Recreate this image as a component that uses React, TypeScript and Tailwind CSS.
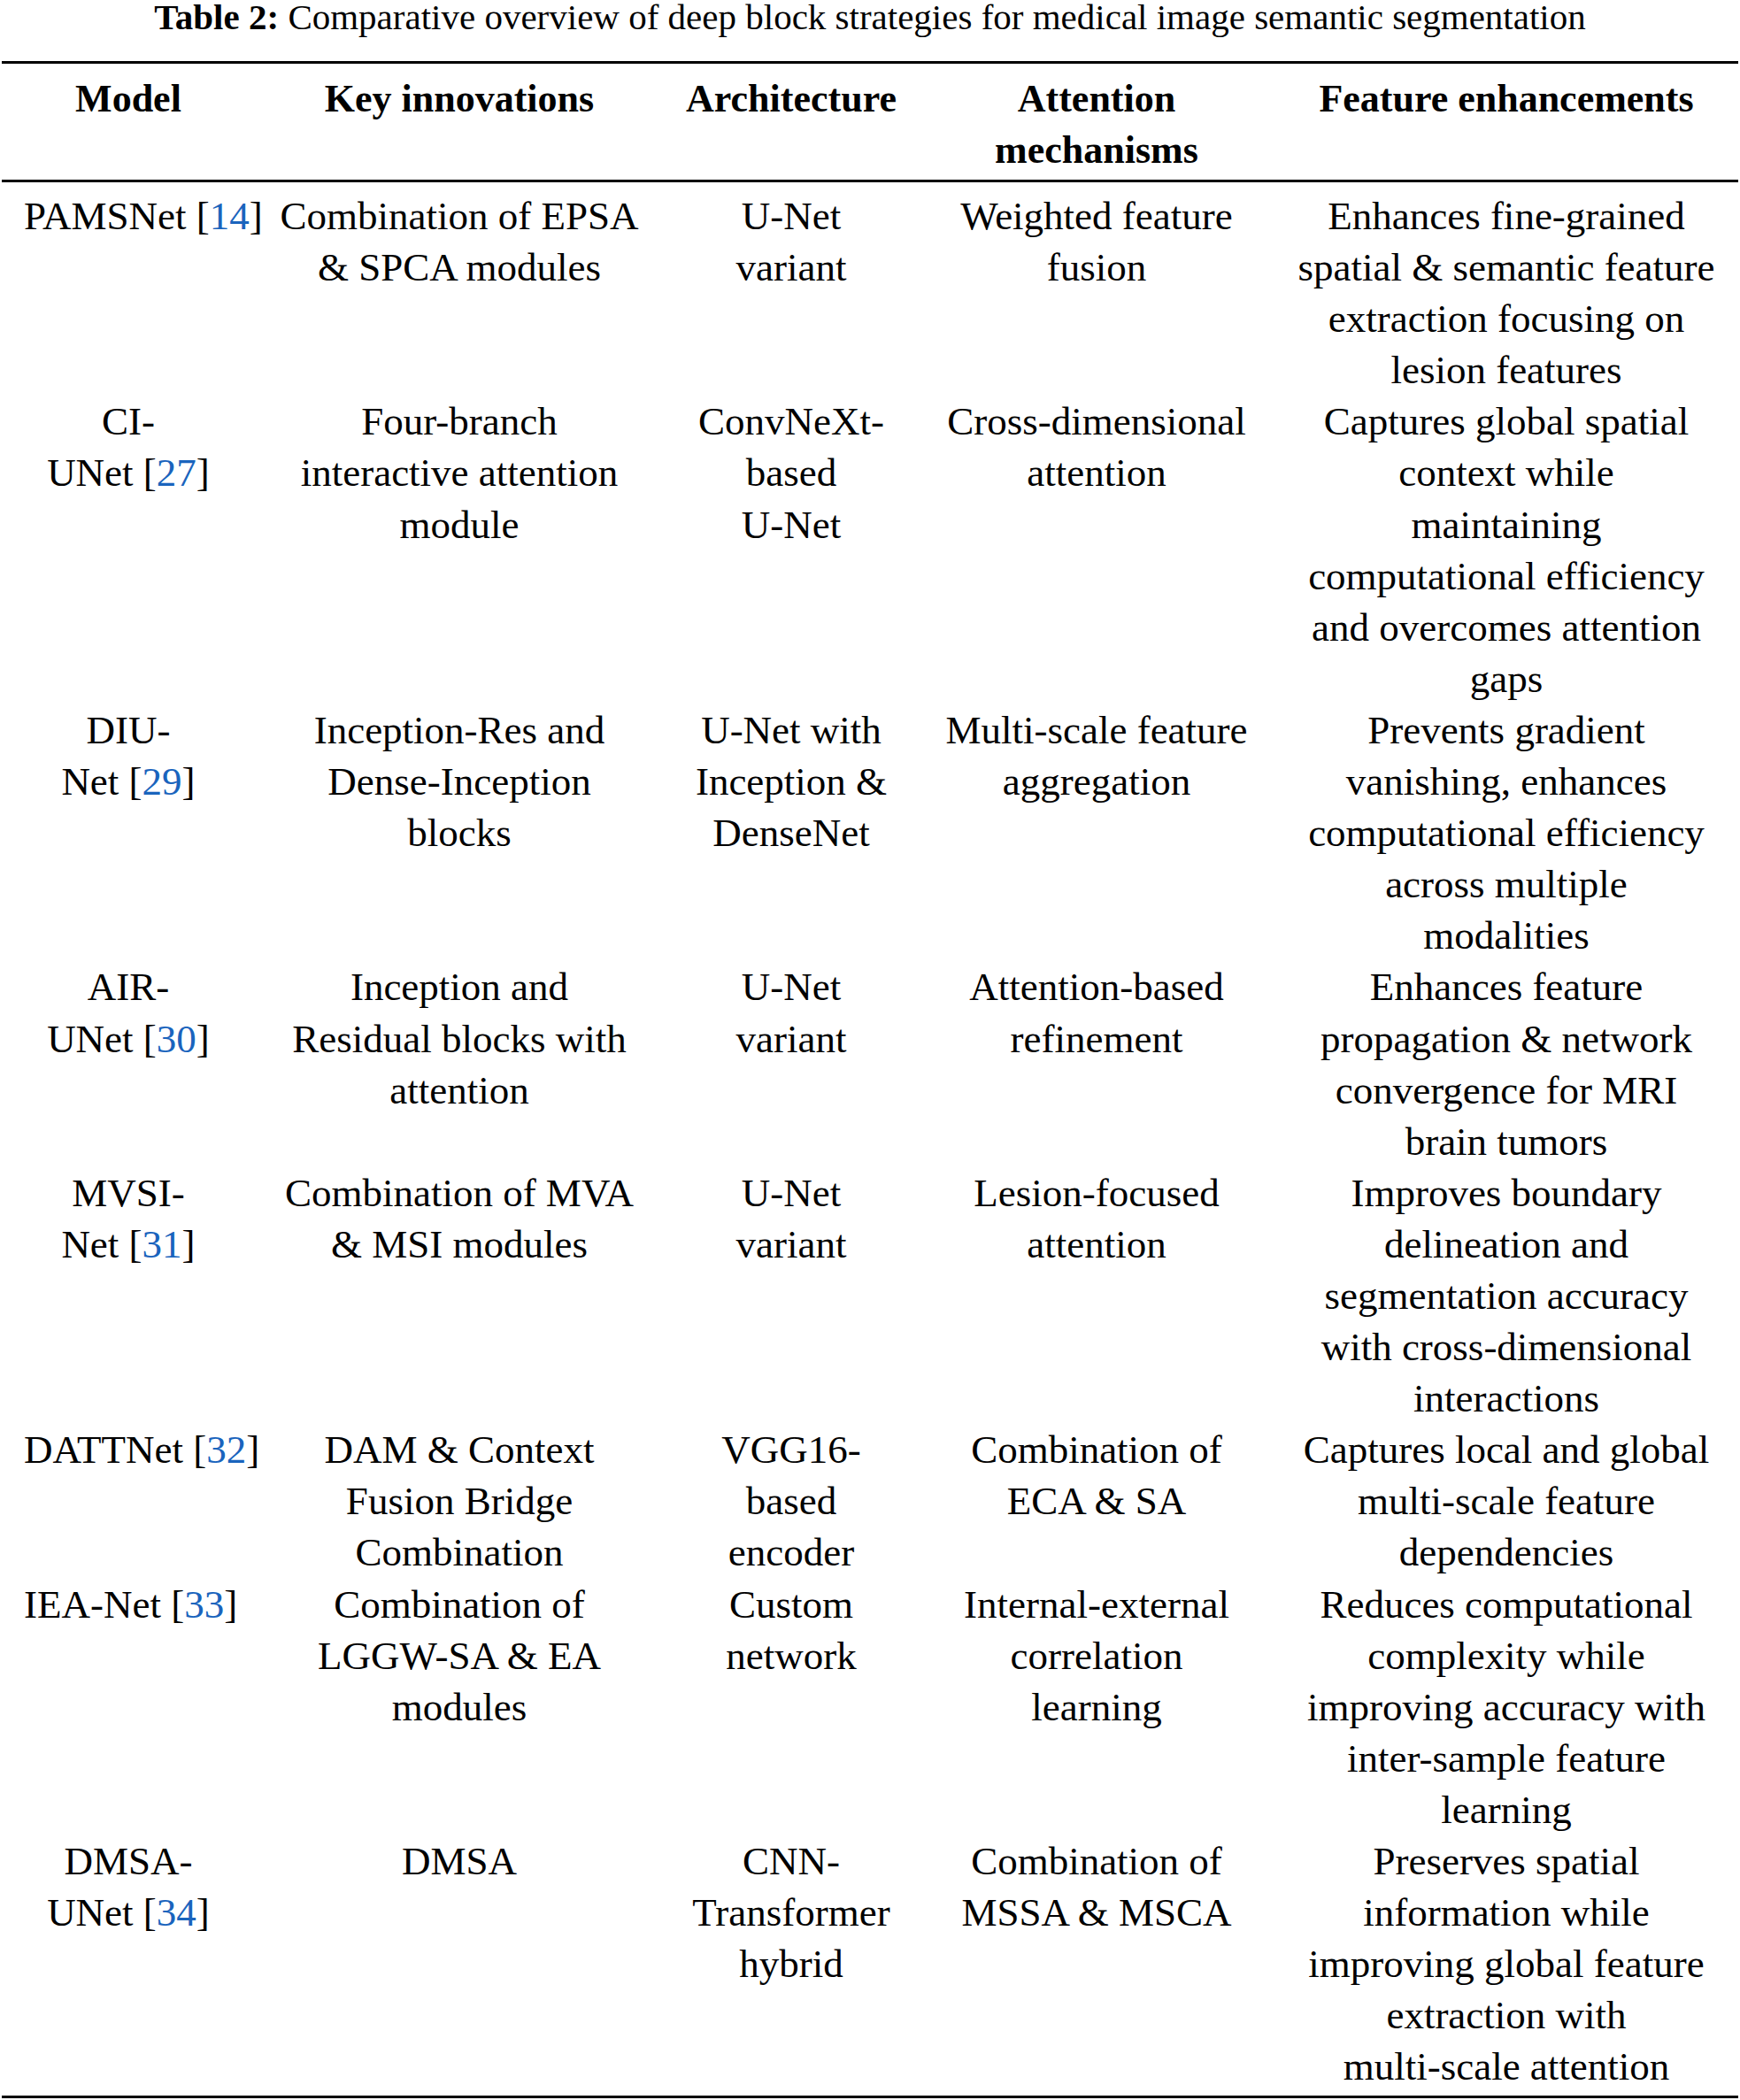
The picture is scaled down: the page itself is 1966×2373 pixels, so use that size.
import React from "react";

type Row = {
  model: React.ReactNode[];
  key: string[];
  arch: string[];
  att: string[];
  feat: string[];
};

const Ref = ({ n }: { n: number }) => (
  <>
    [<span className="text-[#1a64bd]">{n}</span>]
  </>
);

const rows: Row[] = [
  {
    model: [<>PAMSNet&nbsp;<Ref n={14} /></>],
    key: ["Combination of EPSA", "& SPCA modules"],
    arch: ["U-Net", "variant"],
    att: ["Weighted feature", "fusion"],
    feat: ["Enhances fine-grained", "spatial & semantic feature", "extraction focusing on", "lesion features"],
  },
  {
    model: ["CI-", <>UNet&nbsp;<Ref n={27} /></>],
    key: ["Four-branch", "interactive attention", "module"],
    arch: ["ConvNeXt-", "based", "U-Net"],
    att: ["Cross-dimensional", "attention"],
    feat: ["Captures global spatial", "context while", "maintaining", "computational efficiency", "and overcomes attention", "gaps"],
  },
  {
    model: ["DIU-", <>Net&nbsp;<Ref n={29} /></>],
    key: ["Inception-Res and", "Dense-Inception", "blocks"],
    arch: ["U-Net with", "Inception &", "DenseNet"],
    att: ["Multi-scale feature", "aggregation"],
    feat: ["Prevents gradient", "vanishing, enhances", "computational efficiency", "across multiple", "modalities"],
  },
  {
    model: ["AIR-", <>UNet&nbsp;<Ref n={30} /></>],
    key: ["Inception and", "Residual blocks with", "attention"],
    arch: ["U-Net", "variant"],
    att: ["Attention-based", "refinement"],
    feat: ["Enhances feature", "propagation & network", "convergence for MRI", "brain tumors"],
  },
  {
    model: ["MVSI-", <>Net&nbsp;<Ref n={31} /></>],
    key: ["Combination of MVA", "& MSI modules"],
    arch: ["U-Net", "variant"],
    att: ["Lesion-focused", "attention"],
    feat: ["Improves boundary", "delineation and", "segmentation accuracy", "with cross-dimensional", "interactions"],
  },
  {
    model: [<>DATTNet&nbsp;<Ref n={32} /></>],
    key: ["DAM & Context", "Fusion Bridge", "Combination"],
    arch: ["VGG16-", "based", "encoder"],
    att: ["Combination of", "ECA & SA"],
    feat: ["Captures local and global", "multi-scale feature", "dependencies"],
  },
  {
    model: [<>IEA-Net&nbsp;<Ref n={33} /></>],
    key: ["Combination of", "LGGW-SA & EA", "modules"],
    arch: ["Custom", "network"],
    att: ["Internal-external", "correlation", "learning"],
    feat: ["Reduces computational", "complexity while", "improving accuracy with", "inter-sample feature", "learning"],
  },
  {
    model: ["DMSA-", <>UNet&nbsp;<Ref n={34} /></>],
    key: ["DMSA"],
    arch: ["CNN-", "Transformer", "hybrid"],
    att: ["Combination of", "MSSA & MSCA"],
    feat: ["Preserves spatial", "information while", "improving global feature", "extraction with", "multi-scale attention"],
  },
];

const Lines = ({ lines }: { lines: React.ReactNode[] }) => (
  <>
    {lines.map((l, i) => (
      <div key={i} className="whitespace-nowrap">
        {l}
      </div>
    ))}
  </>
);

const gridCols = "grid grid-cols-[290px_458px_292px_398px_528px]";

export default function App() {
  return (
    <div
      className="w-[1966px] bg-white text-black"
      style={{ fontFamily: '"Liberation Serif", "Times New Roman", serif' }}
    >
      <div className="h-[69px] whitespace-nowrap text-center text-[41px] leading-[38px]">
        <span className="font-bold">Table 2:</span> Comparative overview of deep block strategies for medical image semantic segmentation
      </div>
      <div className="mx-[2px] border-t-[3px] border-black" />
      <div className={`${gridCols} pt-[11px] pb-[4px] text-center text-[44px] font-bold leading-[58px]`}>
        <div className="px-[27px]">Model</div>
        <div>Key innovations</div>
        <div>Architecture</div>
        <div>
          <div>Attention</div>
          <div>mechanisms</div>
        </div>
        <div>Feature enhancements</div>
      </div>
      <div className="mx-[2px] border-t-[3px] border-black" />
      <div className="pt-[9px] pb-[4px] text-center text-[45px] leading-[58.1px]">
        {rows.map((r, i) => (
          <div key={i} className={gridCols}>
            <div className="px-[27px]">
              <Lines lines={r.model} />
            </div>
            <div>
              <Lines lines={r.key} />
            </div>
            <div>
              <Lines lines={r.arch} />
            </div>
            <div>
              <Lines lines={r.att} />
            </div>
            <div>
              <Lines lines={r.feat} />
            </div>
          </div>
        ))}
      </div>
      <div className="mx-[2px] border-t-[3px] border-black" />
    </div>
  );
}
